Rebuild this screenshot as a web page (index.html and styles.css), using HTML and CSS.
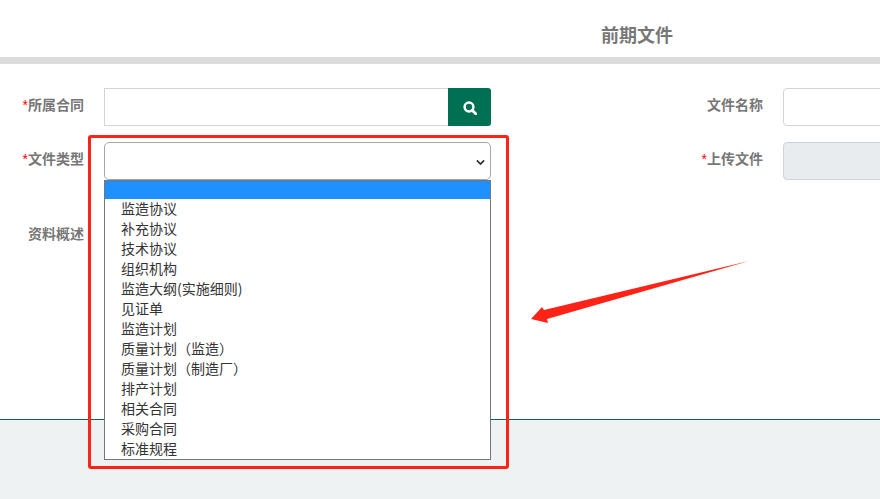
FILE: index.html
```html
<!DOCTYPE html>
<html lang="zh-CN">
<head>
<meta charset="utf-8">
<title>前期文件</title>
<link rel="stylesheet" href="styles.css">
</head>
<body>
<div class="page">
  <header class="title-bar"><h1 class="title">前期文件</h1></header>
  <main class="form">
    <div class="row">
      <label class="label"><span class="req">*</span>所属合同</label>
      <div class="control group">
        <div class="input grouped"></div>
        <button class="search" type="button" aria-label="搜索">
          <svg class="search-icon" viewBox="0 0 14 14"><circle cx="6" cy="6" r="4.4" fill="none" stroke="#fff" stroke-width="2.5"/><path d="M9.2 9.2l3.5 3.5" stroke="#fff" stroke-width="2.8" stroke-linecap="round"/></svg>
        </button>
      </div>
      <label class="label right"><span class="req"></span>文件名称</label>
      <div class="input wide"></div>
    </div>
    <div class="row">
      <label class="label"><span class="req">*</span>文件类型</label>
      <div class="control input select">
        <svg class="chevron" viewBox="0 0 10 7"><path d="M1 1.2l4 4 4-4" fill="none" stroke="#333" stroke-width="2"/></svg>
      </div>
      <label class="label right"><span class="req">*</span>上传文件</label>
      <div class="input wide disabled"></div>
    </div>
    <div class="row notes">
      <label class="label">资料概述</label>
    </div>
  </main>
  <footer class="footer"></footer>

  <ul class="dropdown">
    <li class="option active"></li>
    <li class="option">监造协议</li>
    <li class="option">补充协议</li>
    <li class="option">技术协议</li>
    <li class="option">组织机构</li>
    <li class="option">监造大纲(实施细则)</li>
    <li class="option">见证单</li>
    <li class="option">监造计划</li>
    <li class="option">质量计划（监造）</li>
    <li class="option">质量计划（制造厂）</li>
    <li class="option">排产计划</li>
    <li class="option">相关合同</li>
    <li class="option">采购合同</li>
    <li class="option">标准规程</li>
  </ul>
  <div class="highlight"></div>
  <svg class="arrow" viewBox="0 0 880 499"><polygon points="749,261 544,310 542,307 531,319 548,323 547,319" fill="#ff2317"/></svg>
</div>
</body>
</html>
```
FILE: styles.css
```css
* { box-sizing: border-box; }
html, body { margin: 0; padding: 0; }
body {
  font-family: "Noto Sans CJK SC", "Liberation Sans", sans-serif;
  background: #fff;
  overflow: hidden;
}
.page {
  position: relative;
  width: 880px;
  height: 499px;
  overflow: hidden;
  display: flex;
  flex-direction: column;
}
.title-bar {
  height: 64px;
  flex: none;
  border-bottom: 7px solid #dcdcdc;
  display: flex;
  justify-content: center;
  padding-left: 394px;
}
.title {
  margin: 0;
  font-size: 18px;
  line-height: 24px;
  padding-top: 22px;
  font-weight: 700;
  color: #777;
  white-space: nowrap;
}
.form {
  flex: 1;
  padding-top: 24px;
  display: flex;
  flex-direction: column;
  gap: 16px;
  overflow: hidden;
}
.row {
  display: flex;
  align-items: flex-start;
  height: 38px;
  flex: none;
}
.label {
  width: 104px;
  flex: none;
  padding-right: 20px;
  text-align: right;
  font-size: 14px;
  line-height: 20px;
  padding-top: 6px;
  font-weight: 700;
  color: #777;
  white-space: nowrap;
}
.label.right { width: 292px; }
.req {
  font-family: "Liberation Sans", sans-serif;
  color: #f00;
  font-weight: 400;
}
.control { width: 387px; flex: none; }
.group { display: flex; height: 38px; }
.input {
  height: 38px;
  background: #fff;
  border: 1px solid #ced4da;
  border-radius: 4px;
}
.grouped {
  flex: 1;
  border-radius: 0;
  border-right: none;
}
.search {
  width: 43px;
  height: 38px;
  border: 0;
  padding: 2px 0 0;
  background: #007053;
  border-radius: 0 3px 3px 0;
  display: flex;
  align-items: center;
  justify-content: center;
}
.search-icon { width: 14px; height: 14px; display: block; }
.select {
  position: relative;
  border-color: #a6a6a6;
  border-radius: 5px;
}
.chevron {
  position: absolute;
  right: 5px;
  top: 16px;
  width: 9px;
  height: 7px;
}
.wide { width: 200px; flex: none; }
.disabled { background: #e9ecef; }
.notes .label { padding-top: 27px; }
.footer {
  height: 80px;
  flex: none;
  background: #eff2f3;
  border-top: 1px solid #00694f;
}
.dropdown {
  position: absolute;
  left: 104px;
  top: 180px;
  width: 387px;
  height: 280px;
  margin: 0;
  padding: 0;
  list-style: none;
  background: #fff;
  border: 1px solid #767676;
}
.option {
  height: 20px;
  padding-left: 16px;
  font-size: 14px;
  line-height: 18px;
  color: #333;
  white-space: nowrap;
}
.option.active { height: 18px; background: #1e90ff; }
.highlight {
  position: absolute;
  left: 88px;
  top: 135px;
  width: 421px;
  height: 334px;
  border: 3px solid #ff2317;
  border-radius: 3px;
}
.arrow {
  position: absolute;
  left: 0;
  top: 0;
  width: 880px;
  height: 499px;
}
```
